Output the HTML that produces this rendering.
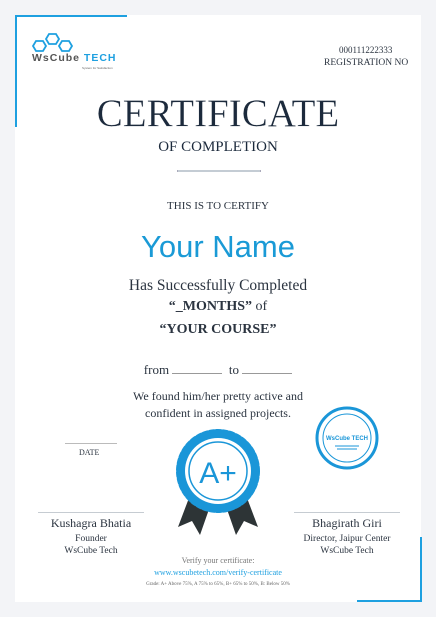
<!DOCTYPE html><html><head><style>
body{margin:0;width:436px;height:617px;background:#f3f4f7;position:relative;overflow:hidden;font-family:"Liberation Serif",serif;color:#2b3440}
.card{position:absolute;left:15px;top:15px;width:406px;height:587px;background:#fff}
.t{position:absolute;left:0;width:436px;text-align:center;white-space:nowrap}
.a{position:absolute;white-space:nowrap}
</style></head><body>
<div class="card"></div>
<div style="position:absolute;left:15px;top:15px;width:112px;height:2px;background:#1ea0e0"></div>
<div style="position:absolute;left:15px;top:15px;width:2px;height:112px;background:#1ea0e0"></div>
<div style="position:absolute;left:420px;top:537px;width:2px;height:65px;background:#1ea0e0"></div>
<div style="position:absolute;left:357px;top:600px;width:65px;height:2px;background:#1ea0e0"></div>
<svg class="a" style="left:30px;top:32px" width="50" height="24" viewBox="0 0 50 24" fill="none" stroke="#1ea0e0" stroke-width="1.8">
<path d="M3 14l3-5h7l3 5-3 5H6z"/><path d="M16 7l3-5h7l3 5-3 5h-7z"/><path d="M29 14l3-5h7l3 5-3 5h-7z"/></svg>
<div class="a" style="left:32px;top:52px;font:bold 10.5px 'Liberation Sans',sans-serif;letter-spacing:1px;color:#555">WsCube <span style="color:#1ea0e0">TECH</span></div>
<div class="a" style="left:82px;top:66px;font:3px 'Liberation Sans',sans-serif;color:#666">System for Satisfaction</div>
<div class="a" style="left:339px;top:45px;font:9px 'Liberation Serif',serif">000111222333</div>
<div class="a" style="left:324px;top:58px;font:9.5px 'Liberation Serif',serif">REGISTRATION NO</div>
<div class="t" style="top:91px;font-size:39px;color:#1c2a3c;-webkit-text-stroke:0.3px #fff">CERTIFICATE</div>
<div class="t" style="top:139px;font-size:15px;color:#1c2a3c">OF COMPLETION</div>
<div class="a" style="left:177px;top:170px;width:82px;height:2px;background:#c4ccd4;border-left:1px solid #aab;border-right:1px solid #aab"></div>
<div class="t" style="top:200px;font-size:11px">THIS IS TO CERTIFY</div>
<div class="t" style="top:229px;font:31px 'Liberation Sans',sans-serif;color:#1a9ad6">Your Name</div>
<div class="t" style="top:277px;font-size:15.5px">Has Successfully Completed</div>
<div class="t" style="top:299px;font-size:14px;font-weight:bold">“_MONTHS” <span style="font-weight:normal">of</span></div>
<div class="t" style="top:322px;font-size:14px;font-weight:bold">“YOUR COURSE”</div>
<div class="t" style="top:362px;font-size:13px">from <span style="display:inline-block;width:50px;border-bottom:1px solid #999"></span> &nbsp;to <span style="display:inline-block;width:50px;border-bottom:1px solid #999"></span></div>
<div class="t" style="top:389px;font-size:12px">We found him/her pretty active and</div>
<div class="t" style="top:406px;font-size:12px">confident in assigned projects.</div>
<div class="a" style="left:65px;top:443px;width:52px;height:1px;background:#bbb"></div>
<div class="a" style="left:79px;top:448px;font-size:8px">DATE</div>
<svg class="a" style="left:170px;top:428px" width="96" height="112" viewBox="0 0 96 112">
<path d="M22 62L8 99l14-6 8 14 14-40zM74 62l14 37-14-6-8 14-14-40z" fill="#2d3436"/>
<circle cx="48" cy="43" r="39" fill="#1a96d8" stroke="#1a96d8" stroke-width="6" stroke-dasharray="4 2.5" stroke-linecap="round"/>
<circle cx="48" cy="43" r="33" fill="#fff"/><circle cx="48" cy="43" r="29" fill="#fff" stroke="#1a96d8" stroke-width="1.5"/>
<text x="48" y="55" text-anchor="middle" font-family="Liberation Sans" font-size="30" fill="#1a96d8">A+</text></svg>
<svg class="a" style="left:315px;top:406px" width="64" height="64" viewBox="0 0 64 64"><circle cx="32" cy="32" r="30" fill="#fff" stroke="#1a96d8" stroke-width="3"/><circle cx="32" cy="32" r="24" fill="none" stroke="#1a96d8" stroke-width="1"/><text x="32" y="34" text-anchor="middle" font-family="Liberation Sans" font-size="6" font-weight="bold" fill="#1a96d8">WsCube TECH</text><path d="M20 40h24M22 43h20" stroke="#1a96d8"/></svg>
<div class="a" style="left:38px;top:512px;width:106px;height:1px;background:#c6ccd2"></div>
<div class="a" style="left:294px;top:512px;width:106px;height:1px;background:#c6ccd2"></div>
<div class="a" style="left:91px;top:516px;font-size:12px;transform:translateX(-50%)">Kushagra Bhatia</div>
<div class="a" style="left:91px;top:533px;font-size:9.5px;transform:translateX(-50%);text-align:center;line-height:12px">Founder<br>WsCube Tech</div>
<div class="a" style="left:347px;top:516px;font-size:12px;transform:translateX(-50%)">Bhagirath Giri</div>
<div class="a" style="left:347px;top:533px;font-size:9.5px;transform:translateX(-50%);text-align:center;line-height:12px">Director, Jaipur Center<br>WsCube Tech</div>
<div class="t" style="top:556px;font-size:8px;color:#777">Verify your certificate:</div>
<div class="t" style="top:568px;font-size:8px;color:#1ea0e0">www.wscubetech.com/verify-certificate</div>
<div class="t" style="top:582px;font-size:5px;color:#666">Grade: A+ Above 75%, A 75% to 65%, B+ 65% to 50%, B: Below 50%</div>
</body></html>
